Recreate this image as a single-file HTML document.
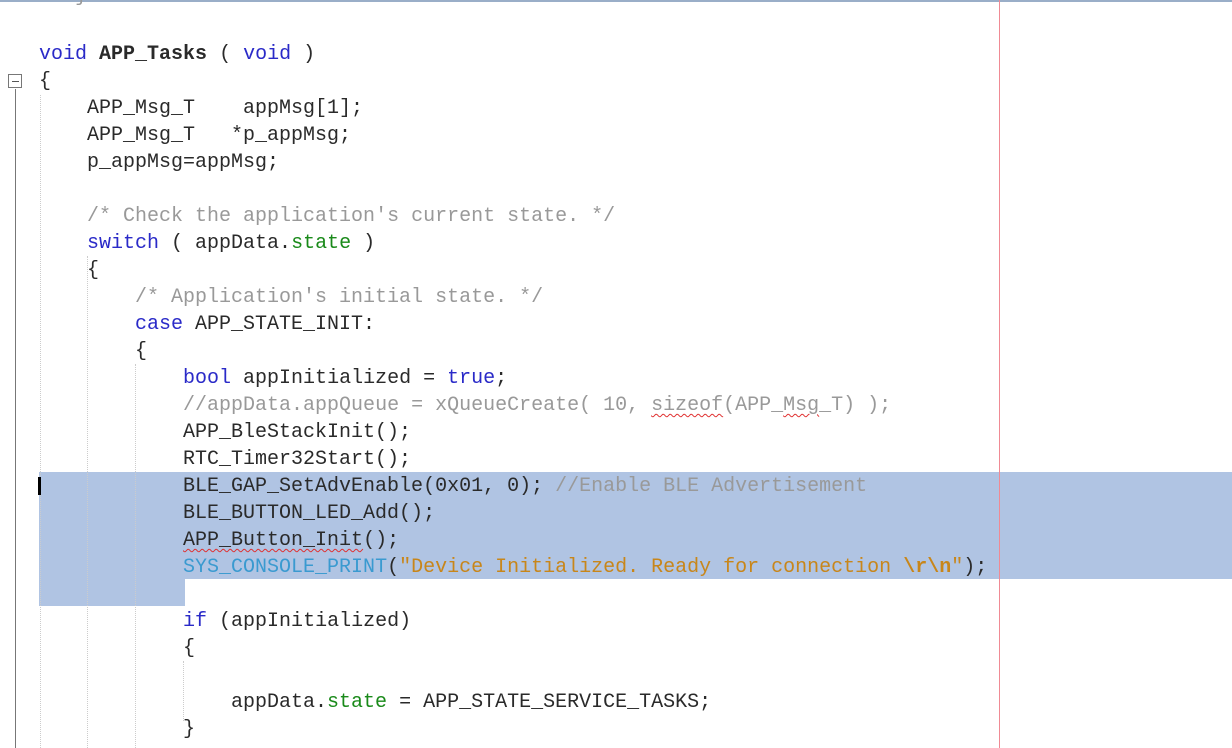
<!DOCTYPE html>
<html><head><style>
html,body{margin:0;padding:0;width:1232px;height:748px;overflow:hidden;background:#fff;}
body{position:relative;font-family:"Liberation Mono","Courier New",monospace;font-size:20px;color:#2a2a2a;}
.top{position:absolute;left:0;top:0;width:1232px;height:2px;background:#9aaec8;}
.red{position:absolute;left:999px;top:0;width:1px;height:748px;background:#f08a94;z-index:3;}
.sel{position:absolute;background:#b0c4e3;}
.fold{position:absolute;left:15px;width:1px;background:#777;}
.box{position:absolute;left:8px;top:74px;width:12px;height:12px;border:1px solid #777;background:#fff;}
.box:after{content:"";position:absolute;left:3px;top:6px;width:7px;height:1px;background:#555;}
.guide{position:absolute;width:0;border-left:1px dotted #ccc;}
.l{position:absolute;left:39px;height:27px;line-height:27px;white-space:pre;}
.k{color:#2a2ac8}.c{color:#999}.g{color:#1a8a1a}.m{color:#3a9ad0}.s{color:#c8861a}.b{font-weight:bold}
.sq{text-decoration:underline wavy #e03030;text-decoration-thickness:1px;text-underline-offset:3px}
.cur{position:absolute;left:38px;top:477px;width:3px;height:18px;background:#000;}
</style></head><body>
<div class="top"></div>
<div class="l c" style="top:-17px;left:39px">   }</div>
<div class="sel" style="left:39px;top:472px;width:1193px;height:107px"></div>
<div class="sel" style="left:39px;top:579px;width:146px;height:27px"></div>
<div class="red"></div>
<div class="fold" style="top:89px;height:659px"></div>
<div class="box"></div>
<div class="guide" style="left:40px;top:95px;height:653px"></div>
<div class="guide" style="left:87px;top:256px;height:492px"></div>
<div class="guide" style="left:135px;top:364px;height:384px"></div>
<div class="guide" style="left:183px;top:661px;height:60px"></div>
<div class="cur"></div>
<div class="l" style="top:41px"><span class="k">void</span> <span class="b">APP_Tasks</span> ( <span class="k">void</span> )</div>
<div class="l" style="top:68px">{</div>
<div class="l" style="top:95px">    APP_Msg_T    appMsg[1];</div>
<div class="l" style="top:122px">    APP_Msg_T   *p_appMsg;</div>
<div class="l" style="top:149px">    p_appMsg=appMsg;</div>
<div class="l" style="top:203px">    <span class="c">/* Check the application's current state. */</span></div>
<div class="l" style="top:230px">    <span class="k">switch</span> ( appData.<span class="g">state</span> )</div>
<div class="l" style="top:257px">    {</div>
<div class="l" style="top:284px">        <span class="c">/* Application's initial state. */</span></div>
<div class="l" style="top:311px">        <span class="k">case</span> APP_STATE_INIT:</div>
<div class="l" style="top:338px">        {</div>
<div class="l" style="top:365px">            <span class="k">bool</span> appInitialized = <span class="k">true</span>;</div>
<div class="l" style="top:392px">            <span class="c">//appData.appQueue = xQueueCreate( 10, <span class="sq">sizeof</span>(APP_<span class="sq">Msg</span>_T) );</span></div>
<div class="l" style="top:419px">            APP_BleStackInit();</div>
<div class="l" style="top:446px">            RTC_Timer32Start();</div>
<div class="l" style="top:473px">            BLE_GAP_SetAdvEnable(0x01, 0); <span class="c">//Enable BLE Advertisement</span></div>
<div class="l" style="top:500px">            BLE_BUTTON_LED_Add();</div>
<div class="l" style="top:527px">            <span class="sq">APP_Button_Init</span>();</div>
<div class="l" style="top:554px">            <span class="m">SYS_CONSOLE_PRINT</span>(<span class="s">"Device Initialized. Ready for connection <b>\r\n</b>"</span>);</div>
<div class="l" style="top:608px">            <span class="k">if</span> (appInitialized)</div>
<div class="l" style="top:635px">            {</div>
<div class="l" style="top:689px">                appData.<span class="g">state</span> = APP_STATE_SERVICE_TASKS;</div>
<div class="l" style="top:716px">            }</div>
</body></html>
